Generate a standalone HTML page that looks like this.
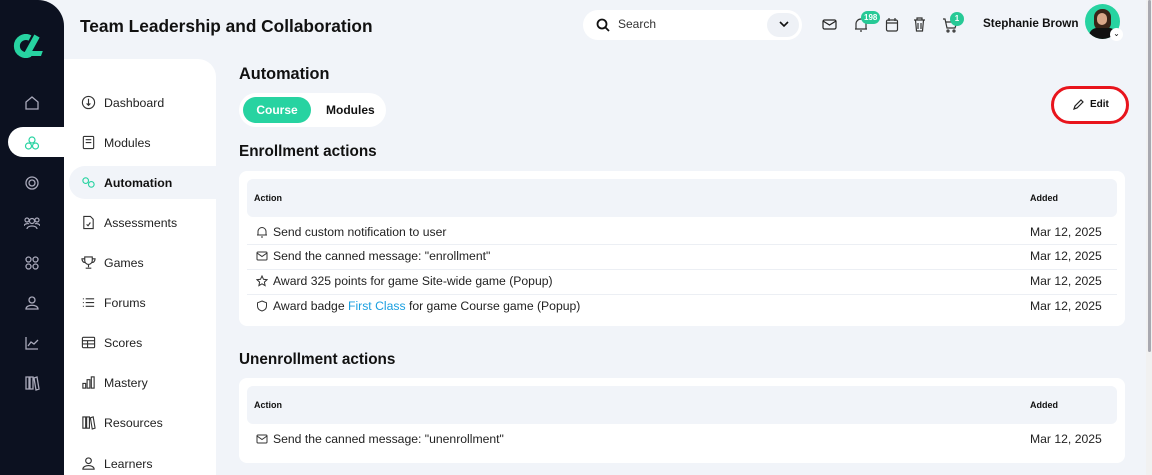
<!DOCTYPE html><html><head><style>
*{margin:0;padding:0;box-sizing:border-box}
body{width:1152px;height:475px;overflow:hidden;background:#f1f4f9;font-family:"Liberation Sans",sans-serif;color:#111;position:relative}
.a{position:absolute}
.side{left:0;top:0;width:64px;height:475px;background:#0c1120;border-top-right-radius:26px}
.ic{position:absolute;left:24px;width:16px;height:16px}
.sub{left:64px;top:59px;width:152px;height:416px;background:#fff;border-top-right-radius:18px}
.mi{position:absolute;left:17px;font-size:12.3px;color:#222;display:flex;align-items:center;gap:8px}
.mi svg{width:15px;height:15px}
.card{background:#fff;border-radius:8px}
.th{background:#f1f4f9;border-radius:6px;font-size:9px;font-weight:bold}
.row{position:absolute;left:247px;width:870px;font-size:12.2px;color:#222;display:flex;align-items:center}
.row .d{position:absolute;left:783px}
.row svg{width:12px;height:12px;margin:0 5px 0 9px}
</style></head><body>
<div class="a side">
<svg class="a" style="left:12px;top:34px" width="40" height="24" viewBox="0 0 40 24"><path d="M18 4A9 9 0 1 0 18 20" stroke="#27d3a1" stroke-width="6" fill="none"/><path d="M25 2L14 22" stroke="#27d3a1" stroke-width="6"/><rect x="20" y="17" width="17" height="5" fill="#27d3a1" transform="skewX(-20)"/></svg>
<svg class="ic" style="top:95px" viewBox="0 0 16 16" fill="none" stroke="#aab" stroke-width="1.3"><path d="M2 7L8 2l6 5v7H2z"/></svg>
<div class="a" style="left:8px;top:127px;width:56px;height:30px;background:#fff;border-radius:15px 0 0 15px"></div>
<svg class="ic" style="top:135px" viewBox="0 0 16 16" fill="none" stroke="#27d3a1" stroke-width="1.2"><circle cx="8" cy="5" r="3"/><circle cx="4.5" cy="11" r="3"/><circle cx="11.5" cy="11" r="3"/></svg>
<svg class="ic" style="top:175px" viewBox="0 0 16 16" fill="none" stroke="#aab" stroke-width="1.3"><circle cx="8" cy="8" r="6"/><circle cx="8" cy="8" r="3"/></svg>
<svg class="ic" style="top:215px" viewBox="0 0 16 16" fill="none" stroke="#aab" stroke-width="1.2"><circle cx="8" cy="6" r="2.5"/><circle cx="3" cy="5" r="2"/><circle cx="13" cy="5" r="2"/><path d="M3 14c0-4 10-4 10 0M0 11c0-2 4-3 5-2M16 11c0-2-4-3-5-2"/></svg>
<svg class="ic" style="top:255px" viewBox="0 0 16 16" fill="none" stroke="#aab" stroke-width="1.3"><circle cx="4.5" cy="4.5" r="2.5"/><circle cx="11.5" cy="4.5" r="2.5"/><circle cx="4.5" cy="11.5" r="2.5"/><circle cx="11.5" cy="11.5" r="2.5"/></svg>
<svg class="ic" style="top:295px" viewBox="0 0 16 16" fill="none" stroke="#aab" stroke-width="1.3"><circle cx="8" cy="5" r="3"/><path d="M2 14c0-5 12-5 12 0z"/></svg>
<svg class="ic" style="top:335px" viewBox="0 0 16 16" fill="none" stroke="#aab" stroke-width="1.3"><path d="M2 2v12h12M4 11l3-4 3 2 4-4"/></svg>
<svg class="ic" style="top:375px" viewBox="0 0 16 16" fill="none" stroke="#aab" stroke-width="1.3"><path d="M2 2h3v12H2zM6 2h3v12H6zM10 3l3-1 2 12-3 1z"/></svg>
</div>
<div class="a" style="left:80px;top:16px;font-size:17.3px;font-weight:bold">Team Leadership and Collaboration</div>
<div class="a" style="left:583px;top:10px;width:219px;height:30px;background:#fff;border-radius:15px"></div>
<svg class="a" style="left:596px;top:18px" width="14" height="14" viewBox="0 0 14 14" fill="none" stroke="#111" stroke-width="1.8"><circle cx="6" cy="6" r="4.5"/><path d="M9.5 9.5L13 13"/></svg>
<div class="a" style="left:618px;top:17px;font-size:12px;color:#333">Search</div>
<div class="a" style="left:767px;top:13px;width:32px;height:24px;background:#eef1f6;border-radius:12px"></div>
<svg class="a" style="left:779px;top:20px" width="10" height="8" viewBox="0 0 10 8" fill="none" stroke="#111" stroke-width="1.6"><path d="M1 2l4 4 4-4"/></svg>
<svg class="a" style="left:822px;top:18px" width="15" height="13" viewBox="0 0 15 13" fill="none" stroke="#222" stroke-width="1.2"><rect x="1" y="2" width="13" height="9" rx="1.5"/><path d="M1 3l6.5 4L14 3"/></svg>
<svg class="a" style="left:854px;top:17px" width="14" height="16" viewBox="0 0 14 16" fill="none" stroke="#333" stroke-width="1.2"><path d="M2 12V7a5 5 0 0 1 10 0v5H1h12M6 14h2"/></svg>
<div class="a" style="left:861px;top:11px;background:#27c996;color:#fff;font-size:8px;font-weight:bold;border-radius:8px;padding:2px 3px">198</div>
<svg class="a" style="left:885px;top:17px" width="14" height="15" viewBox="0 0 14 15" fill="none" stroke="#333" stroke-width="1.2"><rect x="1.5" y="3" width="11" height="11" rx="1.5"/><path d="M4 1v3M10 1v3M1.5 6h11"/></svg>
<svg class="a" style="left:913px;top:17px" width="13" height="15" viewBox="0 0 13 15" fill="none" stroke="#333" stroke-width="1.2"><path d="M1 3h11M4 3V1h5v2M2.5 3l1 11h6l1-11M5 6v6M8 6v6"/></svg>
<svg class="a" style="left:942px;top:18px" width="16" height="15" viewBox="0 0 16 15" fill="none" stroke="#333" stroke-width="1.2"><path d="M1 1h2l2 9h8l2-6H4"/><circle cx="6" cy="13" r="1"/><circle cx="12" cy="13" r="1"/></svg>
<div class="a" style="left:950px;top:12px;width:14px;height:14px;background:#27c996;color:#fff;font-size:8px;font-weight:bold;border-radius:7px;text-align:center;line-height:14px">1</div>
<div class="a" style="left:983px;top:17px;font-size:11.7px;font-weight:bold">Stephanie Brown</div>
<div class="a" style="left:1085px;top:4px;width:35px;height:35px;border-radius:50%;background:#27d3a1;overflow:hidden"><div class="a" style="left:9px;top:5px;width:17px;height:22px;border-radius:8px;background:#3a2418"></div><div class="a" style="left:4px;top:24px;width:28px;height:16px;border-radius:8px 8px 0 0;background:#111"></div><div class="a" style="left:12px;top:9px;width:10px;height:12px;border-radius:5px;background:#d9a789"></div></div>
<div class="a" style="left:1110px;top:28px;width:13px;height:13px;border-radius:50%;background:#fff;font-size:8px;text-align:center;line-height:12px">⌄</div>
<div class="a sub">
<div class="mi" style="top:36px"><svg viewBox="0 0 16 16" fill="none" stroke="#333" stroke-width="1.2"><circle cx="8" cy="8" r="6.5"/><path d="M8 4v6M6 9l2 2 2-2"/></svg>Dashboard</div>
<div class="mi" style="top:76px"><svg viewBox="0 0 16 16" fill="none" stroke="#333" stroke-width="1.2"><rect x="2.5" y="1.5" width="11" height="13" rx="1"/><path d="M5 5h6M5 8h6"/></svg>Modules</div>
<div class="a" style="left:5px;top:107px;width:147px;height:33px;background:#f1f4f9;border-radius:16px 0 0 16px"></div>
<div class="mi" style="top:116px;font-weight:bold;color:#111"><svg viewBox="0 0 16 16" fill="none" stroke="#27d3a1" stroke-width="1.2"><circle cx="5" cy="6" r="3"/><circle cx="11" cy="10" r="3"/></svg>Automation</div>
<div class="mi" style="top:156px"><svg viewBox="0 0 16 16" fill="none" stroke="#333" stroke-width="1.2"><path d="M3 1.5h7l3 3v10H3z"/><path d="M6 10l1.5 1.5L10 8"/></svg>Assessments</div>
<div class="mi" style="top:196px"><svg viewBox="0 0 16 16" fill="none" stroke="#333" stroke-width="1.2"><path d="M4 2h8v4a4 4 0 0 1-8 0zM4 4H1c0 3 2 4 3 4M12 4h3c0 3-2 4-3 4M8 10v3M5 14h6"/></svg>Games</div>
<div class="mi" style="top:236px"><svg viewBox="0 0 16 16" fill="none" stroke="#333" stroke-width="1.2"><path d="M5 4h9M5 8h9M5 12h9M2 4h1M2 8h1M2 12h1"/></svg>Forums</div>
<div class="mi" style="top:276px"><svg viewBox="0 0 16 16" fill="none" stroke="#333" stroke-width="1.2"><rect x="1.5" y="2.5" width="13" height="11" rx="1"/><path d="M1.5 6h13M7 6v7.5M1.5 9.5h13"/></svg>Scores</div>
<div class="mi" style="top:316px"><svg viewBox="0 0 16 16" fill="none" stroke="#333" stroke-width="1.2"><rect x="2" y="9" width="3" height="5"/><rect x="6.5" y="5" width="3" height="9"/><rect x="11" y="2" width="3" height="12"/></svg>Mastery</div>
<div class="mi" style="top:356px"><svg viewBox="0 0 16 16" fill="none" stroke="#333" stroke-width="1.2"><path d="M2 2h3v12H2zM6 2h3v12H6zM10 3l3-1 2 12-3 1z"/></svg>Resources</div>
<div class="mi" style="top:397px"><svg viewBox="0 0 16 16" fill="none" stroke="#333" stroke-width="1.2"><circle cx="8" cy="5" r="3"/><path d="M2 14c0-5 12-5 12 0z"/></svg>Learners</div>
</div>
<div class="a" style="left:239px;top:65px;font-size:16.3px;font-weight:bold">Automation</div>
<div class="a" style="left:239px;top:93px;width:147px;height:34px;background:#fff;border-radius:17px"></div>
<div class="a" style="left:243px;top:97px;width:68px;height:26px;background:#27d3a1;border-radius:13px;color:#fff;font-size:12px;font-weight:bold;text-align:center;line-height:26px">Course</div>
<div class="a" style="left:326px;top:103px;font-size:12px;font-weight:bold">Modules</div>
<div class="a" style="left:1051px;top:86px;width:78px;height:38px;border:3px solid #e8141c;border-radius:19px;background:#fff"></div>
<svg class="a" style="left:1073px;top:99px" width="11" height="11" viewBox="0 0 11 11" fill="none" stroke="#222" stroke-width="1.2"><path d="M1 10l1-3 6-6 2 2-6 6z"/></svg>
<div class="a" style="left:1090px;top:99px;font-size:10px;font-weight:bold">Edit</div>
<div class="a" style="left:239px;top:143px;font-size:15.3px;font-weight:bold">Enrollment actions</div>
<div class="a card" style="left:239px;top:171px;width:886px;height:155px"></div>
<div class="a th" style="left:247px;top:179px;width:870px;height:38px"><span class="a" style="left:7px;top:14px">Action</span><span class="a" style="left:783px;top:14px">Added</span></div>
<div class="row" style="top:222px;height:20px"><svg viewBox="0 0 12 12" fill="none" stroke="#333" stroke-width="1"><path d="M2 9V5.5a4 4 0 0 1 8 0V9H1h10M5 11h2"/></svg>Send custom notification to user<span class="d">Mar 12, 2025</span></div>
<div class="a" style="left:247px;top:244px;width:870px;height:1px;background:#eceff4"></div>
<div class="row" style="top:246px;height:20px"><svg viewBox="0 0 12 12" fill="none" stroke="#333" stroke-width="1"><rect x="1" y="2" width="10" height="8" rx="1"/><path d="M1 3l5 3.5L11 3"/></svg>Send the canned message: "enrollment"<span class="d">Mar 12, 2025</span></div>
<div class="a" style="left:247px;top:269px;width:870px;height:1px;background:#eceff4"></div>
<div class="row" style="top:271px;height:20px"><svg viewBox="0 0 12 12" fill="none" stroke="#333" stroke-width="1"><path d="M6 1l1.5 3.3 3.5.4-2.6 2.4.7 3.5L6 8.8 2.9 10.6l.7-3.5L1 4.7l3.5-.4z"/></svg>Award 325 points for game Site-wide game (Popup)<span class="d">Mar 12, 2025</span></div>
<div class="a" style="left:247px;top:294px;width:870px;height:1px;background:#eceff4"></div>
<div class="row" style="top:296px;height:20px"><svg viewBox="0 0 12 12" fill="none" stroke="#333" stroke-width="1"><path d="M6 1l4.5 1.8V6c0 2.5-2 4.3-4.5 5C3.5 10.3 1.5 8.5 1.5 6V2.8z"/></svg>Award badge&nbsp;<span style="color:#1a9fe0">First Class</span>&nbsp;for game Course game (Popup)<span class="d">Mar 12, 2025</span></div>
<div class="a" style="left:239px;top:351px;font-size:15.3px;font-weight:bold">Unenrollment actions</div>
<div class="a card" style="left:239px;top:378px;width:886px;height:85px"></div>
<div class="a th" style="left:247px;top:386px;width:870px;height:38px"><span class="a" style="left:7px;top:14px">Action</span><span class="a" style="left:783px;top:14px">Added</span></div>
<div class="row" style="top:429px;height:20px"><svg viewBox="0 0 12 12" fill="none" stroke="#333" stroke-width="1"><rect x="1" y="2" width="10" height="8" rx="1"/><path d="M1 3l5 3.5L11 3"/></svg>Send the canned message: "unenrollment"<span class="d">Mar 12, 2025</span></div>
<div class="a" style="left:1146px;top:0;width:6px;height:475px;background:#f1f1f1"></div>
<div class="a" style="left:1148px;top:0;width:3px;height:352px;background:#a8a8b0;border-radius:2px"></div>
</body></html>
